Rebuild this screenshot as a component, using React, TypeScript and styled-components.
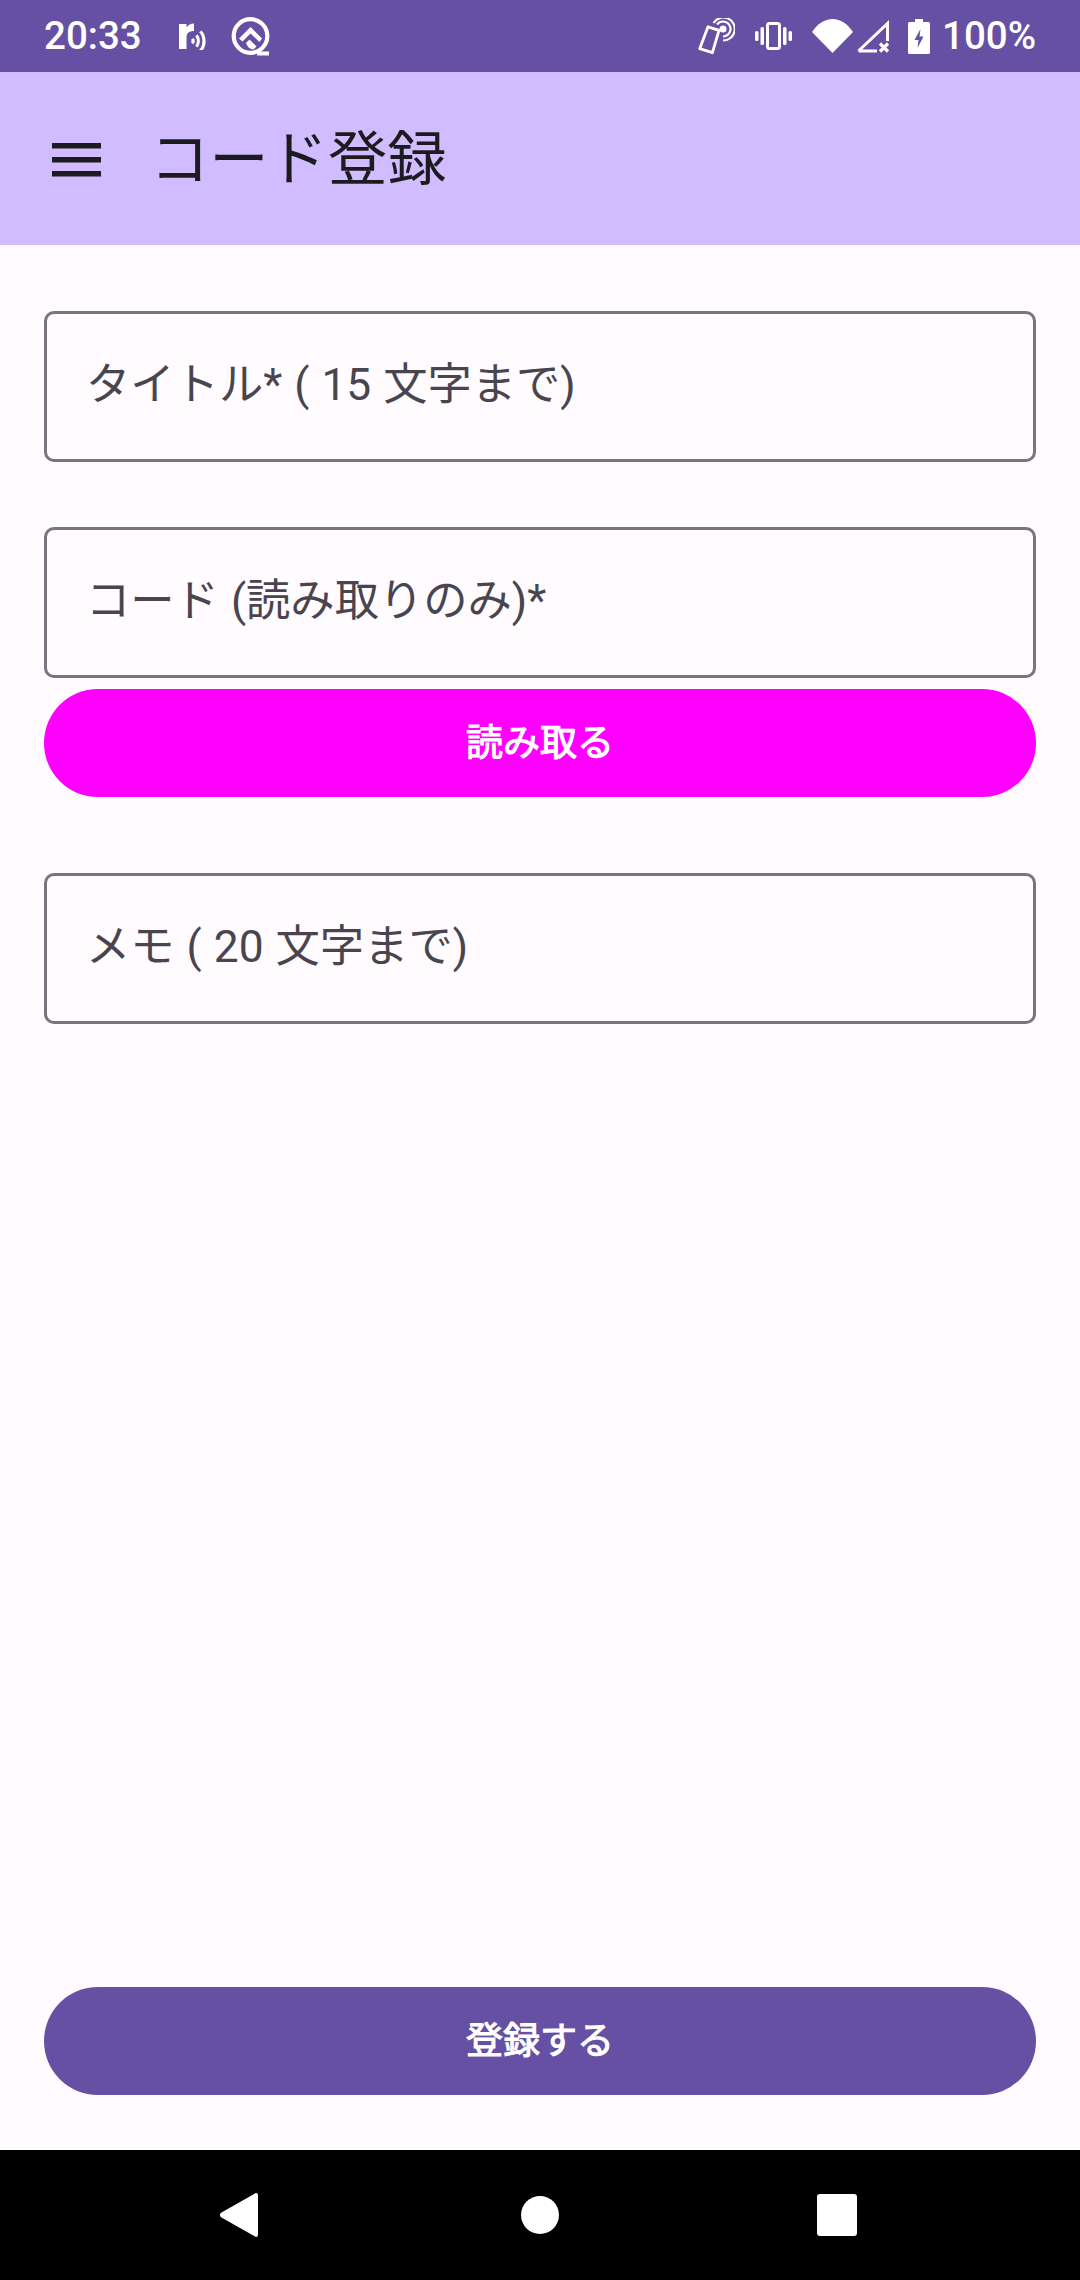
import * as React from "react";

import styled, { createGlobalStyle } from "styled-components";

const GlobalStyle = createGlobalStyle`
  html, body {
    margin: 0;
    padding: 0;
    background: #fffbfe;
  }
  * {
    box-sizing: border-box;
  }
`;

const FONT = `Roboto, "Noto Sans CJK JP", sans-serif`;

const Page = styled.div`
  width: 1080px;
  height: 2280px;
  display: flex;
  flex-direction: column;
  overflow: hidden;
  background: #fffbfe;
  font-family: ${FONT};
`;

const StatusBar = styled.div`
  height: 72px;
  flex: none;
  display: flex;
  align-items: center;
  justify-content: space-between;
  padding: 0 44px;
  background: #6650a4;
  color: #ffffff;
`;

const StatusGroup = styled.div`
  display: flex;
  align-items: center;
`;

const StatusText = styled.span<{ $left?: number }>`
  margin-left: ${(p) => p.$left ?? 0}px;
  font-size: 38.5px;
  font-weight: 500;
  line-height: 72px;
`;

const StatusIcon = styled.svg<{ $left: number }>`
  display: block;
  flex: none;
  margin-left: ${(p) => p.$left}px;
  fill: #ffffff;
`;

const AppBar = styled.header`
  height: 173px;
  flex: none;
  display: flex;
  align-items: center;
  padding: 2px 0 0 44px;
  background: #d0bcff;
  color: #1c1b1f;
`;

const MenuIcon = styled.svg`
  display: block;
  flex: none;
  margin-right: 46px;
`;

const Title = styled.h1`
  margin: 0;
  font-size: 59.3px;
  font-weight: 400;
  line-height: 76px;
`;

const Content = styled.main`
  flex: 1;
  display: flex;
  flex-direction: column;
  padding: 66px 44px 55px;
`;

const Field = styled.div<{ $top?: number }>`
  height: 151px;
  flex: none;
  display: flex;
  align-items: center;
  margin-top: ${(p) => p.$top ?? 0}px;
  padding: 0 0 3px 39px;
  border: 3px solid #79747e;
  border-radius: 10px;
  color: #49454f;
  font-size: 44.3px;
  line-height: 56px;
  word-spacing: 1px;
`;

const ActionButton = styled.button<{ $color: string; $top?: string }>`
  height: 108px;
  flex: none;
  display: block;
  width: 100%;
  margin-top: ${(p) => p.$top ?? "0"};
  padding: 2px 0 0;
  border: 0;
  border-radius: 54px;
  background: ${(p) => p.$color};
  color: #ffffff;
  font-family: ${FONT};
  font-size: 37px;
  font-weight: 400;
  line-height: 48px;
  -webkit-text-stroke: 1.1px #ffffff;
`;

const NavBar = styled.nav`
  height: 130px;
  flex: none;
  display: grid;
  grid-template-columns: 220px 38px 263px 37px 259px 40px;
  align-items: center;
  background: #000000;
`;

const NavIcon = styled.svg<{ $col: number }>`
  display: block;
  grid-column: ${(p) => p.$col};
  fill: #ffffff;
`;

const App: React.FunctionComponent = () => {
  return (
    <Page>
      <GlobalStyle />
      <StatusBar>
        <StatusGroup>
          <StatusText>20:33</StatusText>
          <StatusIcon $left={37} width="27" height="27" viewBox="0 0 27 27">
            <path d="M0 1h7.500v3.500C9.500 1.800 11.500 .5 15 .5v7.500C10.500 8 7.500 10 7.500 14v12H0z" />
            <path d="M14.500 15c1.800 1.700 1.800 4.500 0 6.200l-2.500-1.800c.8-.8.8-1.800 0-2.600z" />
            <path d="M18.500 11.500c3.200 3.300 3.200 9.700 0 13l-2.300-1.700c2.200-2.500 2.200-7.100 0-9.600z" />
            <path d="M22.500 7.500c5.500 5 5.500 16.500 0 21l-2.300-1.700c4.300-4 4.300-13.600 0-17.600z" />
          </StatusIcon>
          <StatusIcon $left={25} width="39" height="39" viewBox="0 0 39 39">
            <circle
              cx="19.500"
              cy="19"
              r="16.800"
              fill="none"
              stroke="#ffffff"
              strokeWidth="4.200"
            />
            <path d="M26 34.500H38V38.500H26z" />
            <path d="M19.500 10L31 21.500 28.500 25 19.500 16.500 11.500 24.500 8 21.500z" />
            <path d="M15 26L18.500 22.500 25.500 29.500 22.500 32.500C20 32.500 18 31 16.500 29z" />
          </StatusIcon>
        </StatusGroup>
        <StatusGroup>
          <StatusIcon $left={0} width="37" height="37" viewBox="0 0 37 37">
            <path
              d="M10 8.800l11 3.600-6.600 22.300-12.700-4z"
              fill="none"
              stroke="#ffffff"
              strokeWidth="2.800"
              strokeLinejoin="round"
            />
            <circle cx="25" cy="11" r="3.500" />
            <path
              d="M19 6.500a7.500 7.500 0 1 1 6 12M15.500 5a11.500 11.500 0 1 1 9.500 17.500"
              fill="none"
              stroke="#ffffff"
              strokeWidth="2.200"
            />
          </StatusIcon>
          <StatusIcon $left={20} width="37" height="28" viewBox="0 0 37 28">
            <rect x="0" y="9" width="3.500" height="10" rx="1.500" />
            <rect x="5.500" y="5" width="3.500" height="18" rx="1.500" />
            <rect x="28" y="5" width="3.500" height="18" rx="1.500" />
            <rect x="33.500" y="9" width="3.500" height="10" rx="1.500" />
            <rect
              x="12.500"
              y="1.500"
              width="12"
              height="25"
              rx="2"
              fill="none"
              stroke="#ffffff"
              strokeWidth="3"
            />
          </StatusIcon>
          <StatusIcon $left={20} width="41" height="34" viewBox="0 0 41 34">
            <path d="M20.500 34L0 13C5.500 5 12.500 0 20.500 0S35.500 5 41 13z" />
          </StatusIcon>
          <StatusIcon $left={2} width="35" height="33" viewBox="0 0 35 33">
            <path
              d="M3.500 31L32.500 3.500V21M3.500 31H22"
              fill="none"
              stroke="#ffffff"
              strokeWidth="3"
            />
            <path
              d="M25 23.500l8 8M33 23.500l-8 8"
              fill="none"
              stroke="#ffffff"
              strokeWidth="3.200"
            />
          </StatusIcon>
          <StatusIcon $left={18} width="22" height="35" viewBox="0 0 22 35">
            <path d="M7 0h8v3h5.500a1.500 1.500 0 0 1 1.500 1.500V33.500a1.500 1.500 0 0 1-1.500 1.500H1.500A1.500 1.500 0 0 1 0 33.500V4.500A1.500 1.500 0 0 1 1.500 3H7z" />
            <path d="M12.500 10l-6 11h4l-1 8 6-11.500h-4z" fill="#6650a4" />
          </StatusIcon>
          <StatusText $left={12}>100%</StatusText>
        </StatusGroup>
      </StatusBar>
      <AppBar>
        <MenuIcon width="60" height="63" viewBox="0 0 60 63">
          <rect x="8" y="15" width="49" height="5.500" fill="#1c1b1f" />
          <rect x="8" y="29" width="49" height="5.500" fill="#1c1b1f" />
          <rect x="8" y="43" width="49" height="5.500" fill="#1c1b1f" />
        </MenuIcon>
        <Title>コード登録</Title>
      </AppBar>
      <Content>
        <Field>タイトル* ( 15 文字まで)</Field>
        <Field $top={65}>コード (読み取りのみ)*</Field>
        <ActionButton $color="#ff00ff" $top="11px">
          読み取る
        </ActionButton>
        <Field $top={76}>メモ ( 20 文字まで)</Field>
        <ActionButton $color="#6650a4" $top="auto">
          登録する
        </ActionButton>
      </Content>
      <NavBar>
        <NavIcon $col={2} width="38" height="44" viewBox="0 0 38 44">
          <path d="M35 0.500c1.700-1 3 0 3 2V41.500c0 2-1.300 3-3 2L1.500 24.500c-2-1.200-2-3.800 0-5z" />
        </NavIcon>
        <NavIcon $col={4} width="38" height="38" viewBox="0 0 38 38">
          <circle cx="19" cy="19" r="19" />
        </NavIcon>
        <NavIcon $col={6} width="40" height="42" viewBox="0 0 40 42">
          <rect width="40" height="42" rx="3" />
        </NavIcon>
      </NavBar>
    </Page>
  );
};

export default App;
